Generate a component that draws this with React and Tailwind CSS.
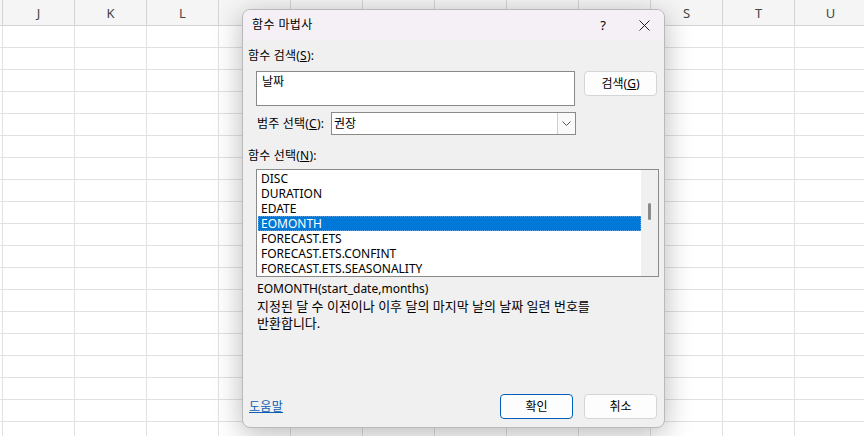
// App.jsx
import React from 'react';

const cols = ['J', 'K', 'L', 'M', 'N', 'O', 'P', 'Q', 'R', 'S', 'T', 'U'];
// columns hidden behind the dialog keep their cell but show no letter
const covered = ['M', 'N', 'O', 'P', 'Q', 'R'];
const rows = Array.from({ length: 19 }, (_, i) => i);

const items = [
  'DISC',
  'DURATION',
  'EDATE',
  'EOMONTH',
  'FORECAST.ETS',
  'FORECAST.ETS.CONFINT',
  'FORECAST.ETS.SEASONALITY',
];

function Sheet() {
  return (
    <div className="flex flex-col w-[864px] h-[436px] overflow-hidden bg-white">
      {/* column header */}
      <div className="flex h-[26px] shrink-0 bg-[#f5f5f5] border-b border-[#d4d4d4]">
        <div className="w-[3px] shrink-0 border-r border-[#d4d4d4]" />
        {cols.map((c) => (
          <div
            key={c}
            className="w-[72px] shrink-0 flex items-center justify-center pt-[2px] border-r border-[#d4d4d4] text-[13px] text-[#444]"
          >
            {covered.includes(c) ? '' : c}
          </div>
        ))}
      </div>
      {rows.map((r) => (
        <div key={r} className="flex h-[22px] shrink-0 border-b border-[#e1e1e1]">
          <div className="w-[3px] shrink-0 border-r border-[#e1e1e1]" />
          {cols.map((c) => (
            <div key={c} className="w-[72px] shrink-0 border-r border-[#e1e1e1]" />
          ))}
        </div>
      ))}
    </div>
  );
}

function Btn({ children, primary }) {
  return (
    <div
      className={
        'w-[73px] h-[25px] flex items-center justify-center rounded-[4px] bg-[#fdfdfd] text-[12px] ' +
        (primary ? 'border border-[#005fb8]' : 'border border-[#d5d5d5]')
      }
    >
      {children}
    </div>
  );
}

function Dialog() {
  return (
    <div className="absolute left-[242px] top-[9px] w-[423px] h-[419px] flex flex-col rounded-[8px] overflow-hidden bg-[#f0f0f0] border border-[#b9b9b9] shadow-[0_6px_28px_rgba(0,0,0,0.28)] text-black">
      {/* title bar */}
      <div className="h-[30px] shrink-0 flex items-center bg-[#f4f0f5] pl-[9px] pr-[13px]">
        <span className="text-[12px] leading-none tracking-[0.4px]">함수 마법사</span>
        <span className="ml-auto text-[13px] mr-[33px] leading-none">?</span>
        <svg width="11" height="11" viewBox="0 0 11 11" className="mr-[1px]">
          <path d="M0.5 0.5 L10.5 10.5 M10.5 0.5 L0.5 10.5" stroke="#222" strokeWidth="1" />
        </svg>
      </div>

      {/* body */}
      <div className="flex-1 flex flex-col pl-[5px] pr-[7px] pb-[8px]">
        <div className="mt-[8px] text-[12px] leading-[16px] tracking-[0.2px]">
          함수 검색(<span className="underline">S</span>):
        </div>
        <div className="mt-[7px] ml-[8px] flex items-start gap-[9px]">
          <div className="w-[319px] h-[35px] bg-white border border-[#8a8a8a] px-[5px] pt-[2px] text-[12px] leading-[16px]">
            날짜
          </div>
          <Btn>
            검색(<span className="underline">G</span>)
          </Btn>
        </div>

        <div className="mt-[6px] ml-[9px] flex items-center">
          <span className="text-[12px] leading-[16px] w-[74px] tracking-[0.2px]">
            범주 선택(<span className="underline">C</span>):
          </span>
          <div className="w-[245px] h-[23px] flex bg-white border border-[#8a8a8a]">
            <div className="flex-1 flex items-center px-[2px] text-[12px]">권장</div>
            <div className="w-[18px] flex items-center justify-center border-l border-[#cfcfcf] bg-[#fafafa]">
              <svg width="9" height="5" viewBox="0 0 9 5">
                <path d="M0.5 0.5 L4.5 4.5 L8.5 0.5" stroke="#555" strokeWidth="1" fill="none" />
              </svg>
            </div>
          </div>
        </div>

        <div className="mt-[13px] text-[12px] leading-[16px] tracking-[0.2px]">
          함수 선택(<span className="underline">N</span>):
        </div>
        <div className="mt-[5px] ml-[8px] w-[403px] h-[108px] flex bg-white border border-[#8a8a8a]">
          <div className="flex-1 flex flex-col pt-[1px] pl-[1px]">
            {items.map((it) => (
              <div
                key={it}
                className={
                  'h-[15px] pl-[3px] text-[12px] leading-[15px] ' +
                  (it === 'EOMONTH'
                    ? 'bg-[#0078d7] text-white outline outline-1 outline-dotted outline-[#5aa0e0] -outline-offset-1'
                    : '')
                }
              >
                {it}
              </div>
            ))}
          </div>
          <div className="w-[17px] bg-[#f0f0f0] relative">
            <div className="absolute left-[7px] top-[33px] w-[3px] h-[17px] bg-[#8a8a8a] rounded-full" />
          </div>
        </div>

        <div className="mt-[4px] ml-[9px] text-[12px] leading-[16px]">
          EOMONTH(start_date,months)
        </div>
        <div className="mt-[1px] ml-[9px] text-[13px] leading-[17px] whitespace-nowrap">
          지정된 달 수 이전이나 이후 달의 마지막 날의 날짜 일련 번호를
          <br />
          반환합니다.
        </div>

        <div className="mt-auto flex items-center">
          <span className="ml-[1px] text-[12px] text-[#0a5fb4] underline tracking-[0.3px]">도움말</span>
          <div className="ml-auto flex gap-[11px]">
            <Btn primary>확인</Btn>
            <Btn>취소</Btn>
          </div>
        </div>
      </div>
    </div>
  );
}

export default function App() {
  return (
    <div
      className="relative w-[864px] h-[436px] overflow-hidden"
      style={{ fontFamily: '"Noto Sans", "Noto Sans CJK KR", sans-serif' }}
    >
      <Sheet />
      <Dialog />
    </div>
  );
}
